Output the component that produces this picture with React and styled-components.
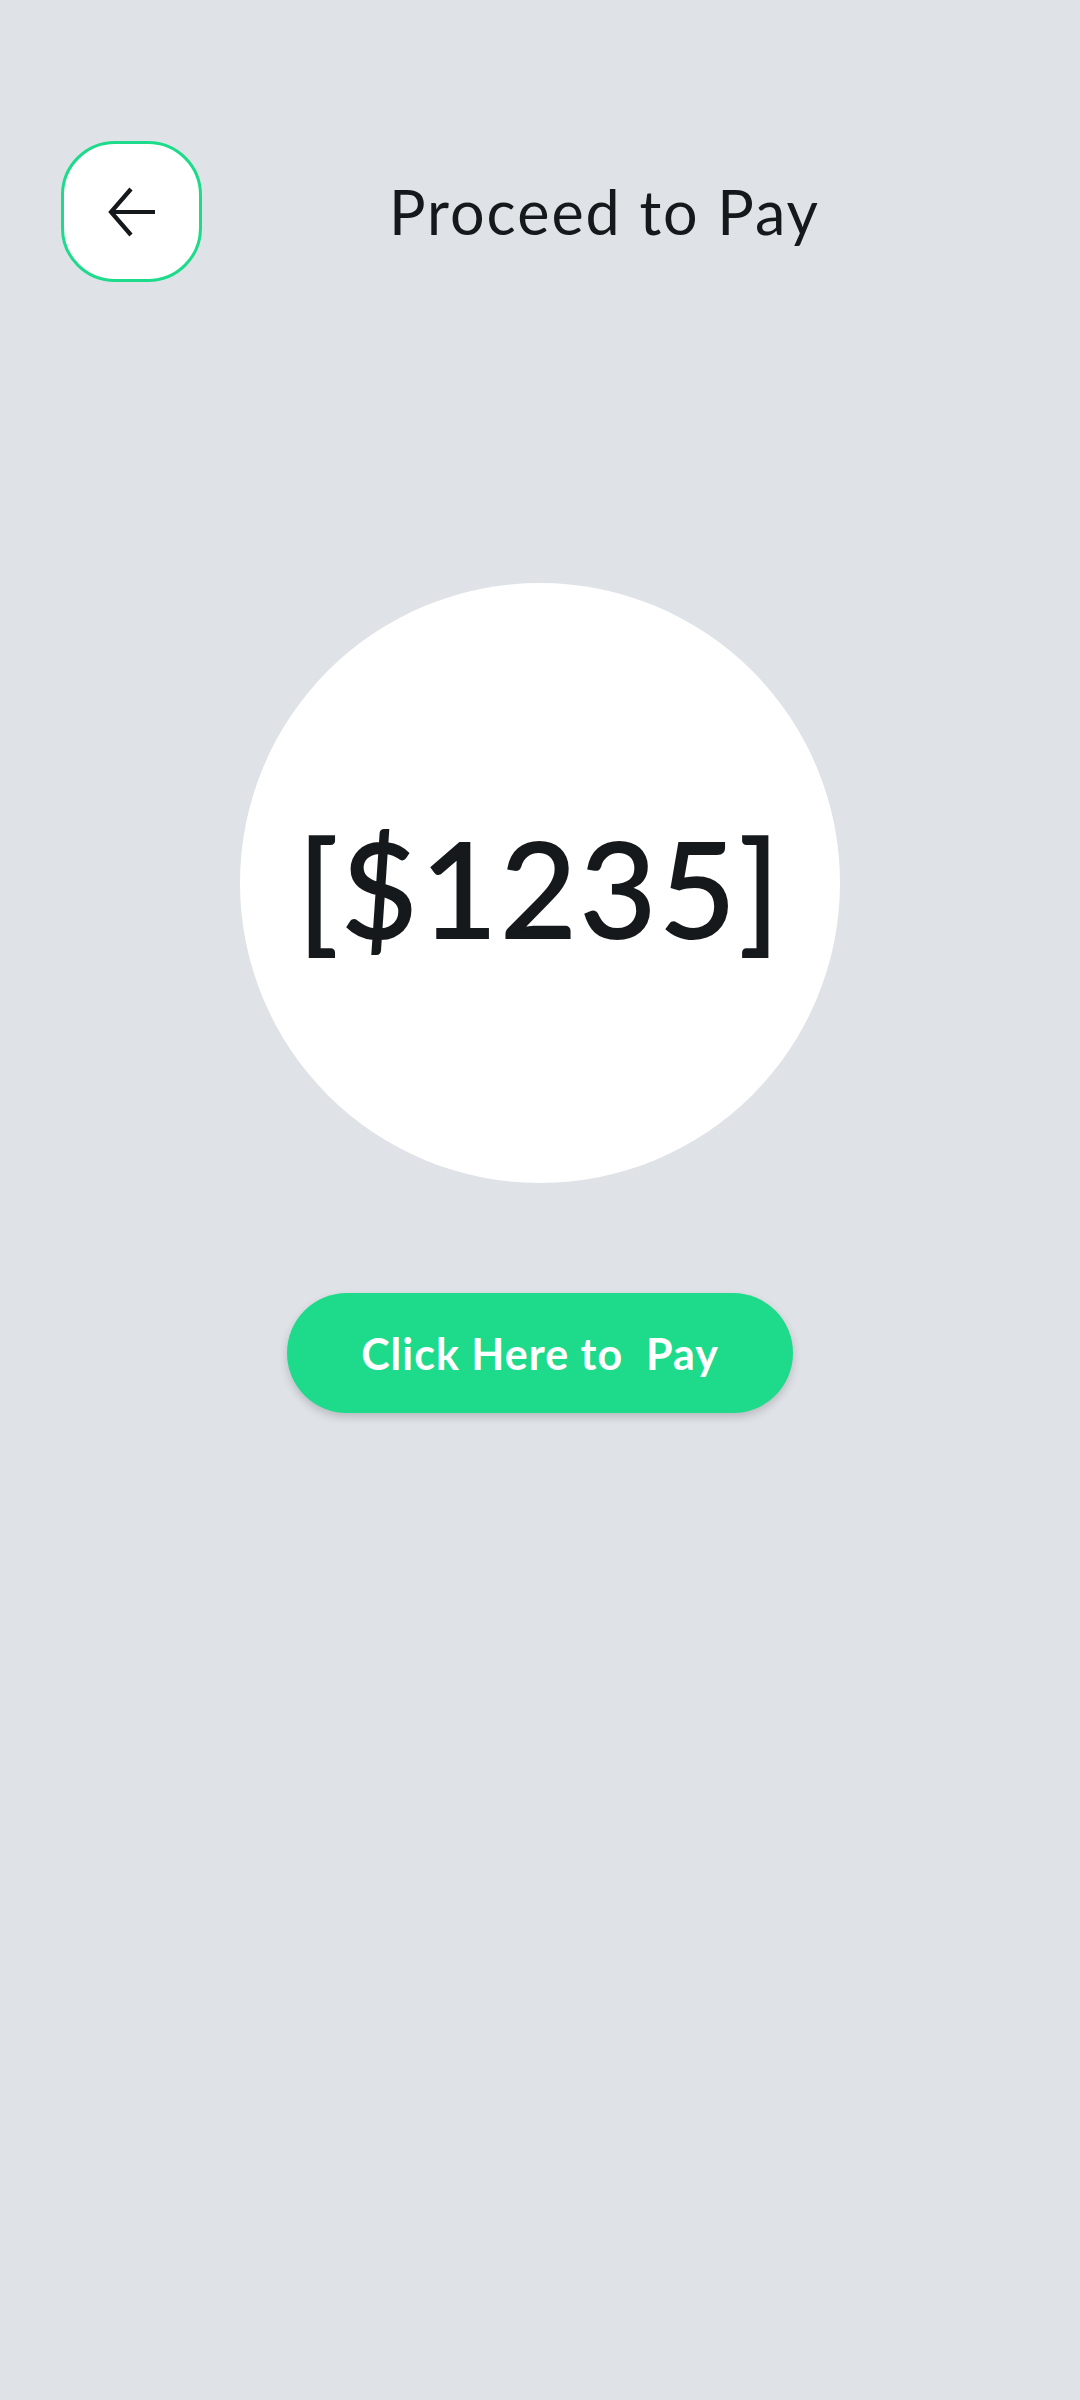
import React from 'react';
import styled, { createGlobalStyle } from 'styled-components';

const GlobalStyle = createGlobalStyle`
  html, body {
    margin: 0;
    padding: 0;
    background: #dfe3e8;
  }
  * { box-sizing: border-box; }
`;

const Page = styled.div`
  min-height: 2400px;
  background: #dfe3e8;
  font-family: Lato, 'Noto Sans', sans-serif;
  color: #15191c;
  display: flex;
  flex-direction: column;
  align-items: center;
`;

const Header = styled.header`
  width: 100%;
  display: flex;
  align-items: center;
  padding: 141px 61px 0;
`;

const BackButton = styled.button`
  width: 141px;
  height: 141px;
  flex-shrink: 0;
  border-radius: 54px;
  border: 3px solid #1ddb8b;
  background: #ffffff;
  display: flex;
  align-items: center;
  justify-content: center;
  padding: 0;
  cursor: pointer;
`;

const Title = styled.h1`
  flex: 1;
  margin: 0 0 0 -12px;
  text-align: center;
  font-size: 61px;
  font-weight: 400;
  letter-spacing: 2px;
`;

const AmountCircle = styled.div`
  margin-top: 301px;
  width: 600px;
  height: 600px;
  border-radius: 50%;
  background: #ffffff;
  display: flex;
  align-items: center;
  justify-content: center;
`;

const Amount = styled.span`
  font-size: 132px;
  font-weight: 400;
  line-height: 1;
  letter-spacing: 3px;
  -webkit-text-stroke: 2px #15191c;
  margin-top: 8px;
`;

const PayButton = styled.button`
  margin-top: 110px;
  width: 506px;
  height: 120px;
  border: none;
  border-radius: 60px;
  background: #1ddb8b;
  color: #ffffff;
  font-family: Lato, 'Noto Sans', sans-serif;
  font-size: 43px;
  font-weight: 700;
  letter-spacing: 1px;
  white-space: pre;
  box-shadow: 0 4px 8px rgba(0, 0, 0, 0.18);
  cursor: pointer;
`;

const ArrowLeft = () => (
  <svg width="50" height="50" viewBox="0 0 50 50" fill="none">
    <path d="M48 25H4M24 2L4 25l20 23" stroke="#15191c" strokeWidth="4.2" />
  </svg>
);

export default function App() {
  return (
    <Page>
      <GlobalStyle />
      <Header>
        <BackButton aria-label="Back">
          <ArrowLeft />
        </BackButton>
        <Title>Proceed to Pay</Title>
      </Header>

      <AmountCircle>
        <Amount>[$1235]</Amount>
      </AmountCircle>

      <PayButton>{'Click Here to  Pay'}</PayButton>
    </Page>
  );
}
